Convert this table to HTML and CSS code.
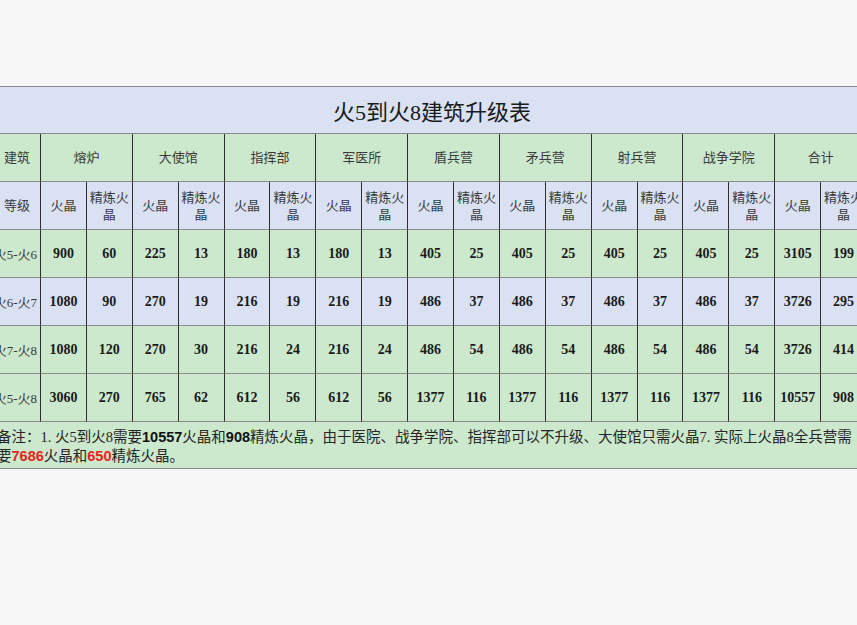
FILE: index.html
```html
<!DOCTYPE html>
<html lang="zh-CN">
<head>
<meta charset="utf-8">
<title>火5到火8建筑升级表</title>
<link rel="stylesheet" href="styles.css">
</head>
<body>
<div class="page">
  <div class="sheet">
    <div class="cell title">火5到火8建筑升级表</div>

    <div class="cell hd g">建筑</div>
    <div class="cell hd g span2">熔炉</div>
    <div class="cell hd g span2">大使馆</div>
    <div class="cell hd g span2">指挥部</div>
    <div class="cell hd g span2">军医所</div>
    <div class="cell hd g span2">盾兵营</div>
    <div class="cell hd g span2">矛兵营</div>
    <div class="cell hd g span2">射兵营</div>
    <div class="cell hd g span2">战争学院</div>
    <div class="cell hd g span2">合计</div>

    <div class="cell hd b">等级</div>
    <div class="cell hd b">火晶</div><div class="cell hd b">精炼火晶</div>
    <div class="cell hd b">火晶</div><div class="cell hd b">精炼火晶</div>
    <div class="cell hd b">火晶</div><div class="cell hd b">精炼火晶</div>
    <div class="cell hd b">火晶</div><div class="cell hd b">精炼火晶</div>
    <div class="cell hd b">火晶</div><div class="cell hd b">精炼火晶</div>
    <div class="cell hd b">火晶</div><div class="cell hd b">精炼火晶</div>
    <div class="cell hd b">火晶</div><div class="cell hd b">精炼火晶</div>
    <div class="cell hd b">火晶</div><div class="cell hd b">精炼火晶</div>
    <div class="cell hd b">火晶</div><div class="cell hd b">精炼火晶</div>

    <div class="cell lbl g">火5-火6</div>
    <div class="cell num g">900</div><div class="cell num g">60</div>
    <div class="cell num g">225</div><div class="cell num g">13</div>
    <div class="cell num g">180</div><div class="cell num g">13</div>
    <div class="cell num g">180</div><div class="cell num g">13</div>
    <div class="cell num g">405</div><div class="cell num g">25</div>
    <div class="cell num g">405</div><div class="cell num g">25</div>
    <div class="cell num g">405</div><div class="cell num g">25</div>
    <div class="cell num g">405</div><div class="cell num g">25</div>
    <div class="cell num g">3105</div><div class="cell num g">199</div>

    <div class="cell lbl b">火6-火7</div>
    <div class="cell num b">1080</div><div class="cell num b">90</div>
    <div class="cell num b">270</div><div class="cell num b">19</div>
    <div class="cell num b">216</div><div class="cell num b">19</div>
    <div class="cell num b">216</div><div class="cell num b">19</div>
    <div class="cell num b">486</div><div class="cell num b">37</div>
    <div class="cell num b">486</div><div class="cell num b">37</div>
    <div class="cell num b">486</div><div class="cell num b">37</div>
    <div class="cell num b">486</div><div class="cell num b">37</div>
    <div class="cell num b">3726</div><div class="cell num b">295</div>

    <div class="cell lbl g">火7-火8</div>
    <div class="cell num g">1080</div><div class="cell num g">120</div>
    <div class="cell num g">270</div><div class="cell num g">30</div>
    <div class="cell num g">216</div><div class="cell num g">24</div>
    <div class="cell num g">216</div><div class="cell num g">24</div>
    <div class="cell num g">486</div><div class="cell num g">54</div>
    <div class="cell num g">486</div><div class="cell num g">54</div>
    <div class="cell num g">486</div><div class="cell num g">54</div>
    <div class="cell num g">486</div><div class="cell num g">54</div>
    <div class="cell num g">3726</div><div class="cell num g">414</div>

    <div class="cell lbl g">火5-火8</div>
    <div class="cell num g">3060</div><div class="cell num g">270</div>
    <div class="cell num g">765</div><div class="cell num g">62</div>
    <div class="cell num g">612</div><div class="cell num g">56</div>
    <div class="cell num g">612</div><div class="cell num g">56</div>
    <div class="cell num g">1377</div><div class="cell num g">116</div>
    <div class="cell num g">1377</div><div class="cell num g">116</div>
    <div class="cell num g">1377</div><div class="cell num g">116</div>
    <div class="cell num g">1377</div><div class="cell num g">116</div>
    <div class="cell num g">10557</div><div class="cell num g">908</div>

    <div class="cell note">备注：1. 火5到火8需要<b>10557</b>火晶和<b>908</b>精炼火晶，由于医院、战争学院、指挥部可以不升级、大使馆只需火晶7. 实际上火晶8全兵营需<br>要<b class="red">7686</b>火晶和<b class="red">650</b>精炼火晶。</div>
  </div>
</div>
</body>
</html>
```

FILE: styles.css
```css
html, body {
  margin: 0;
  padding: 0;
  background: #f6f6f6;
  overflow: hidden;
  width: 857px;
  height: 625px;
}

.page {
  padding-top: 86px;
  width: 857px;
  overflow: hidden;
}

.sheet {
  display: grid;
  grid-template-columns: 47px repeat(18, 45.9px);
  grid-template-rows: 47px repeat(6, 48px) 47px;
  margin-left: -6px;
  width: max-content;
  border-top: 1px solid #8c8c8c;
  font-family: "Liberation Serif", "Noto Sans CJK SC", serif;
}

.cell {
  box-sizing: border-box;
  border-right: 1px solid #2e2e2e;
  border-bottom: 1px solid #8a8a8a;
  display: flex;
  align-items: center;
  justify-content: center;
  text-align: center;
}

.g { background: #cce8cd; }
.b { background: #d9e1f3; }

.span2 { grid-column: span 2; }

.title {
  grid-column: 1 / -1;
  background: #d9e1f3;
  border-right: none;
  font-size: 22px;
  color: #1a1a1a;
  justify-content: flex-start;
  padding-left: 339px;
}

.hd {
  font-size: 13px;
  line-height: 17px;
  color: #3a3a3a;
  padding: 0 1px;
}

.lbl {
  font-size: 13px;
  color: #3a3a3a;
  white-space: nowrap;
  justify-content: flex-end;
  padding-right: 3px;
}

.num {
  font-size: 14px;
  font-weight: bold;
  color: #1a1a1a;
}

.note {
  grid-column: 1 / -1;
  background: #cce8cd;
  border-right: none;
  display: block;
  text-align: left;
  white-space: nowrap;
  font-size: 14.5px;
  line-height: 19px;
  color: #262626;
  padding: 6px 0 0 3px;
}

.note b {
  font-family: "Liberation Sans", "Noto Sans CJK SC", sans-serif;
  font-weight: bold;
  color: #111;
}

.note b.red {
  color: #e8231f;
}
```
